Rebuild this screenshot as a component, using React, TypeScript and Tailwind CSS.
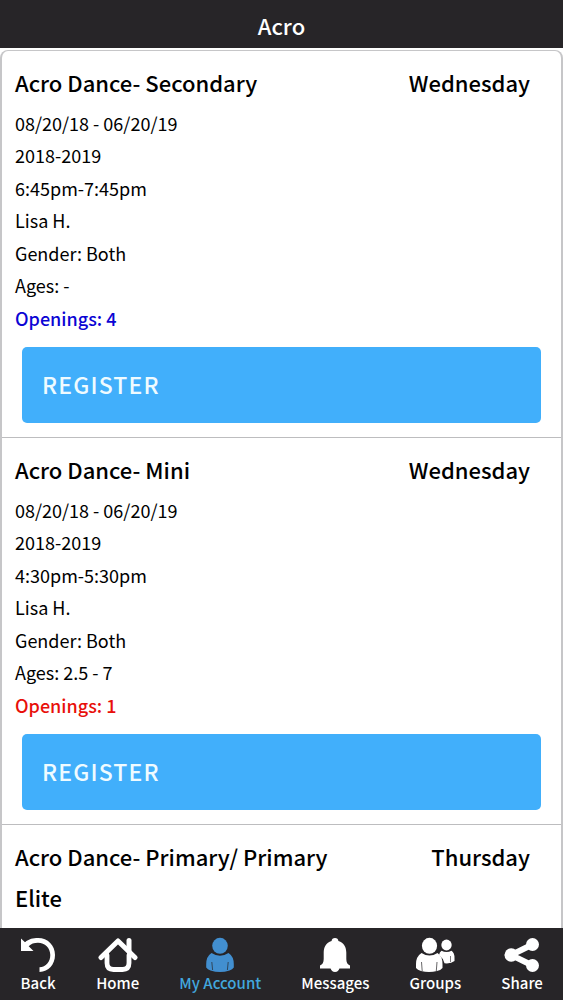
import type { ReactNode } from "react";

type ClassItem = {
  name: string;
  day: string;
  details?: string[][];
  openings?: number;
};

const classes: ClassItem[] = [
  {
    name: "Acro Dance- Secondary",
    day: "Wednesday",
    details: [
      ["08/20/18 - 06/20/19", "2018-2019"],
      ["6:45pm-7:45pm", "Lisa H."],
      ["Gender: Both", "Ages: -"],
    ],
    openings: 4,
  },
  {
    name: "Acro Dance- Mini",
    day: "Wednesday",
    details: [
      ["08/20/18 - 06/20/19", "2018-2019"],
      ["4:30pm-5:30pm", "Lisa H."],
      ["Gender: Both", "Ages: 2.5 - 7"],
    ],
    openings: 1,
  },
  { name: "Acro Dance- Primary/ Primary Elite", day: "Thursday" },
];

function ClassCard({ item }: { item: ClassItem }) {
  return (
    <li className="border-b border-[#bdbdbf] px-[13px] pt-[11px] pb-3.5 last:border-b-0 last:pb-0">
      <div className="flex items-start justify-between gap-4 pr-[18px] text-[22px] leading-[41px] font-medium">
        <h2 className="max-w-[340px]">{item.name}</h2>
        <span>{item.day}</span>
      </div>
      {item.details && (
        <div className="mt-1 flex flex-col gap-px text-[18px] leading-8">
          {item.details.map((group) => (
            <div key={group[0]}>
              {group.map((line) => (
                <p key={line}>{line}</p>
              ))}
            </div>
          ))}
          <p className={item.openings === 1 ? "font-medium text-[#e80f0a]" : "font-medium text-[#0b04d4]"}>
            Openings: {item.openings}
          </p>
        </div>
      )}
      {item.details && (
        <div className="px-[7px] pt-[13px]">
          <button
            type="button"
            className="block h-[76px] w-full rounded-[5px] bg-[#41affb] px-5 pb-0.5 text-left text-[23px] font-medium tracking-wider text-[#effbff]"
          >
            REGISTER
          </button>
        </div>
      )}
    </li>
  );
}

function Icon({ children, width = 36 }: { children: ReactNode; width?: number }) {
  return (
    <svg width={width} height="36" viewBox={`0 0 ${width} 36`} fill="currentColor" aria-hidden="true">
      {children}
    </svg>
  );
}

const BackIcon = (
  <Icon>
    <path d="M1 1.500 L5 5.300 C9 1.800 13 1 18 1 C28 1 35 8.500 35 18 C35 27.500 28.500 34.500 19.500 35 L19.500 30.300 C26 29.800 30.300 25 30.300 18 C30.300 11 25 5.700 18 5.700 C14 5.700 11 6.700 8.700 9.200 L13.500 14 L1 14 Z" />
  </Icon>
);

const HomeIcon = (
  <Icon width={40}>
    <g fill="none" stroke="currentColor" strokeLinecap="round" strokeLinejoin="round">
      <path d="M3 20.500 L20 4 L37 20.500" strokeWidth="5" />
      <path d="M9 18 V26 Q9 32.500 15.500 32.500 H24.500 Q31 32.500 31 26 V18" strokeWidth="4.800" />
      <path d="M31 3.500 V14" strokeWidth="5" />
    </g>
  </Icon>
);

const AccountIcon = (
  <Icon width={30}>
    <ellipse cx="15" cy="8.800" rx="7.800" ry="8" />
    <path d="M6.500 16 Q15 21.500 23.500 16 Q28.800 19.500 28.800 27 V30.500 Q27.500 32.500 24.500 33.500 Q15 36.500 5.500 33.500 Q2.500 32.500 1.200 30.500 V27 Q1.200 19.500 6.500 16 Z" />
    <path d="M6.800 25 L7.600 33 M23.200 25 L22.400 33" stroke="#272528" strokeWidth="0.700" fill="none" />
  </Icon>
);

const MessagesIcon = (
  <Icon width={32}>
    <path d="M16 1 C18 1 19.300 2.200 19.400 4 C25 5.600 27.300 10.500 27.300 15.500 V22 C27.300 25.500 28.500 27.500 31 28.500 V31.500 H1 V28.500 C3.500 27.500 4.700 25.500 4.700 22 V15.500 C4.700 10.500 7 5.600 12.600 4 C12.700 2.200 14 1 16 1 Z" />
    <path d="M11.500 31 H20.500 Q19.500 35 16 35 Q12.500 35 11.500 31 Z" />
  </Icon>
);

const GroupsIcon = (
  <Icon width={40}>
    <ellipse cx="31.500" cy="8" rx="5.200" ry="5.400" />
    <path d="M26.500 13.700 Q31.500 16.500 36.500 13.700 Q39.500 15.500 39.500 21 V24 Q36 27 29.500 26.300 Q28 21 24 18 Q24.500 15 26.500 13.700 Z" />
    <path d="M35.500 19 V25" stroke="#272528" strokeWidth="0.600" fill="none" />
    <ellipse cx="14.500" cy="8.800" rx="7.600" ry="8" />
    <path d="M6.500 16 Q14.500 21 22.500 16 Q27.500 19.500 27.500 27 V31 Q25.500 33.500 22 34 Q14 36 6 34 Q2.500 33 1 31 V27 Q1 19.500 6.500 16 Z" />
    <path d="M6.500 25 L7.200 34 M22 25 L21.300 34" stroke="#272528" strokeWidth="0.700" fill="none" />
  </Icon>
);

const ShareIcon = (
  <Icon>
    <path d="M28.500 7.500 L7 18 L28.500 28.500" fill="none" stroke="currentColor" strokeWidth="6" />
    <circle cx="28.500" cy="7.500" r="6.500" />
    <circle cx="7.300" cy="18" r="6.800" />
    <circle cx="28.500" cy="28.500" r="6.500" />
  </Icon>
);

const tabs = [
  { label: "Back", icon: BackIcon },
  { label: "Home", icon: HomeIcon },
  { label: "My Account", icon: AccountIcon, active: true },
  { label: "Messages", icon: MessagesIcon },
  { label: "Groups", icon: GroupsIcon },
  { label: "Share", icon: ShareIcon },
];

export default function App() {
  return (
    <div className="flex h-screen flex-col bg-white font-['Noto_Sans_CJK_SC','Noto_Sans',sans-serif] text-black">
      <header className="flex h-12 shrink-0 items-center justify-center bg-[#272528] pt-0.5">
        <h1 className="text-[22px] leading-8 font-medium text-white">Acro</h1>
      </header>
      <main className="flex min-h-0 flex-1 flex-col overflow-y-auto pt-0.5">
        <ul className="flex-1 rounded-t-lg border-x-2 border-t border-[#c6c6c8]">
          {classes.map((item) => (
            <ClassCard key={item.name} item={item} />
          ))}
        </ul>
      </main>
      <nav className="flex h-[72px] shrink-0 justify-around bg-[#272528] pt-[9px]" aria-label="Main">
        {tabs.map((tab) => (
          <a
            key={tab.label}
            href="#"
            aria-current={tab.active ? "page" : undefined}
            className={tab.active ? "flex flex-col items-center text-[#428fd0]" : "flex flex-col items-center text-white"}
          >
            {tab.icon}
            <span
              className={
                tab.active
                  ? "text-[15px] leading-5 font-medium text-[#42a7dd]"
                  : "text-[15px] leading-5 font-medium"
              }
            >
              {tab.label}
            </span>
          </a>
        ))}
      </nav>
    </div>
  );
}
